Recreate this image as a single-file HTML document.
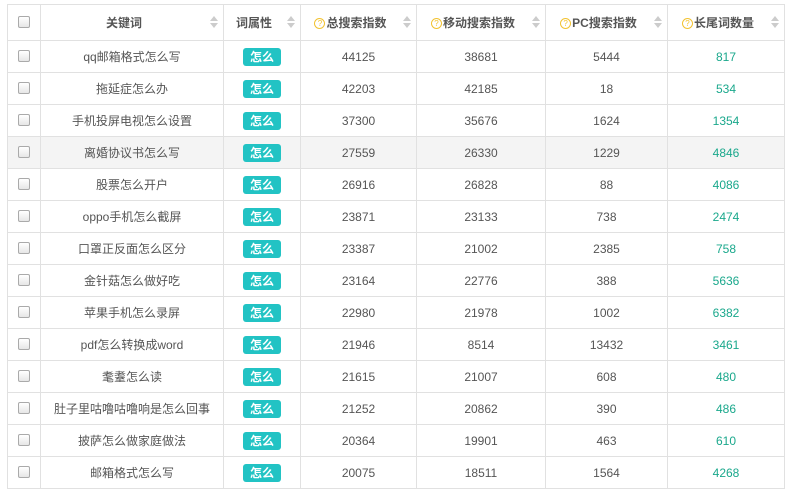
<!DOCTYPE html>
<html><head><meta charset="utf-8"><style>
body{margin:0;background:#fff;font-family:"Liberation Sans","Noto Sans CJK SC",sans-serif;font-size:12px;color:#555;}
table{position:absolute;left:7px;top:4px;border-collapse:collapse;table-layout:fixed;width:777px;}
td,th{border:1px solid #e1e1e1;text-align:center;padding:0;height:31px;white-space:nowrap;overflow:hidden;}
th{height:35px;font-weight:bold;color:#555;position:relative;font-size:12px;padding-right:16px;}
th:first-child{padding-right:0;}
.cb{display:inline-block;width:10px;height:10px;border:1px solid #aaa;border-radius:2px;background:linear-gradient(#fff,#e6e6e6);vertical-align:middle;margin-top:-3px;}
.b{display:inline-block;background:#22c3c4;color:#fff;font-weight:bold;width:38px;height:18px;line-height:18px;border-radius:3px;font-size:12px;}
.g{color:#1aa88c;}
.q{display:inline-block;width:9px;height:9px;border:1px solid #f2c230;border-radius:50%;color:#f2c230;font-size:8px;line-height:9px;font-weight:normal;vertical-align:1px;margin-right:1px;}
.s{position:absolute;right:5px;top:11px;width:8px;}
.s:before{content:"";position:absolute;left:0;top:0;border:4px solid transparent;border-bottom:5px solid #ccc;border-top:0;}
.s:after{content:"";position:absolute;left:0;top:7px;border:4px solid transparent;border-top:5px solid #ccc;border-bottom:0;}
tr.h td{background:#f4f4f4;}
</style></head><body>
<table>
<colgroup><col style="width:33px"><col style="width:183px"><col style="width:77px"><col style="width:116px"><col style="width:129px"><col style="width:122px"><col style="width:117px"></colgroup>
<tr><th><span class="cb"></span></th><th>关键词<i class="s"></i></th><th>词属性<i class="s"></i></th><th><span class="q">?</span>总搜索指数<i class="s"></i></th><th><span class="q">?</span>移动搜索指数<i class="s"></i></th><th><span class="q">?</span>PC搜索指数<i class="s"></i></th><th><span class="q">?</span>长尾词数量<i class="s"></i></th></tr>
<tr><td><span class="cb"></span></td><td>qq邮箱格式怎么写</td><td><span class="b">怎么</span></td><td>44125</td><td>38681</td><td>5444</td><td class="g">817</td></tr>
<tr><td><span class="cb"></span></td><td>拖延症怎么办</td><td><span class="b">怎么</span></td><td>42203</td><td>42185</td><td>18</td><td class="g">534</td></tr>
<tr><td><span class="cb"></span></td><td>手机投屏电视怎么设置</td><td><span class="b">怎么</span></td><td>37300</td><td>35676</td><td>1624</td><td class="g">1354</td></tr>
<tr class="h"><td><span class="cb"></span></td><td>离婚协议书怎么写</td><td><span class="b">怎么</span></td><td>27559</td><td>26330</td><td>1229</td><td class="g">4846</td></tr>
<tr><td><span class="cb"></span></td><td>股票怎么开户</td><td><span class="b">怎么</span></td><td>26916</td><td>26828</td><td>88</td><td class="g">4086</td></tr>
<tr><td><span class="cb"></span></td><td>oppo手机怎么截屏</td><td><span class="b">怎么</span></td><td>23871</td><td>23133</td><td>738</td><td class="g">2474</td></tr>
<tr><td><span class="cb"></span></td><td>口罩正反面怎么区分</td><td><span class="b">怎么</span></td><td>23387</td><td>21002</td><td>2385</td><td class="g">758</td></tr>
<tr><td><span class="cb"></span></td><td>金针菇怎么做好吃</td><td><span class="b">怎么</span></td><td>23164</td><td>22776</td><td>388</td><td class="g">5636</td></tr>
<tr><td><span class="cb"></span></td><td>苹果手机怎么录屏</td><td><span class="b">怎么</span></td><td>22980</td><td>21978</td><td>1002</td><td class="g">6382</td></tr>
<tr><td><span class="cb"></span></td><td>pdf怎么转换成word</td><td><span class="b">怎么</span></td><td>21946</td><td>8514</td><td>13432</td><td class="g">3461</td></tr>
<tr><td><span class="cb"></span></td><td>耄耋怎么读</td><td><span class="b">怎么</span></td><td>21615</td><td>21007</td><td>608</td><td class="g">480</td></tr>
<tr><td><span class="cb"></span></td><td>肚子里咕噜咕噜响是怎么回事</td><td><span class="b">怎么</span></td><td>21252</td><td>20862</td><td>390</td><td class="g">486</td></tr>
<tr><td><span class="cb"></span></td><td>披萨怎么做家庭做法</td><td><span class="b">怎么</span></td><td>20364</td><td>19901</td><td>463</td><td class="g">610</td></tr>
<tr><td><span class="cb"></span></td><td>邮箱格式怎么写</td><td><span class="b">怎么</span></td><td>20075</td><td>18511</td><td>1564</td><td class="g">4268</td></tr>
</table>
</body></html>
